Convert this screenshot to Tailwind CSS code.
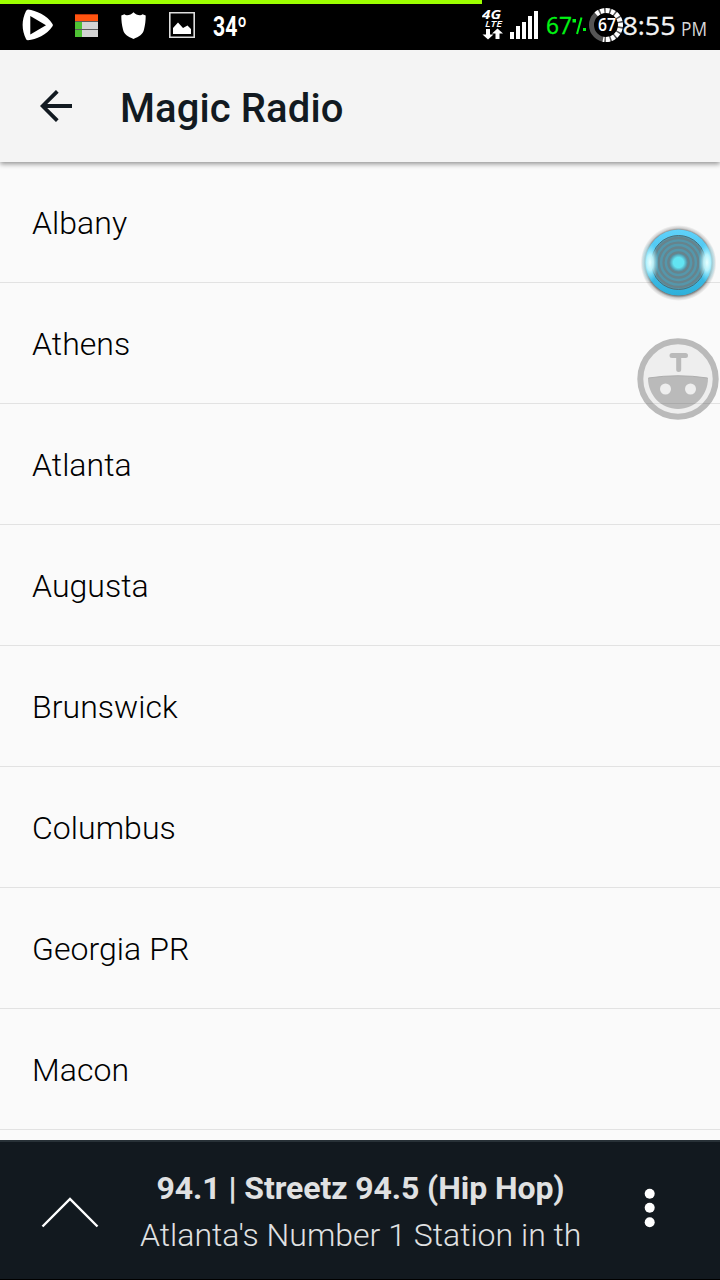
<!DOCTYPE html>
<html lang="en">
<head>
    <meta charset="UTF-8">
    <meta name="viewport" content="width=device-width, initial-scale=1.0">
    <title>Magic Radio</title>
    <script src="https://cdn.jsdelivr.net/npm/@tailwindcss/browser@4"></script>
</head>
<body class="bg-[#fafafa] font-['Roboto',sans-serif]">
    <div class="relative flex h-[1280px] w-[720px] flex-col overflow-hidden">
        <!-- Status bar -->
        <div class="relative flex h-[50px] shrink-0 items-start bg-black text-white">
            <div class="absolute left-0 top-0 h-1 w-[482px] bg-[#9dff00]"></div>
            <svg class="ml-[22px] mt-[9px] h-8 w-8 shrink-0" viewBox="0 0 32 32">
                <path fill="#fff" fill-rule="evenodd" d="M6 .5C14 1.5 25 6 30.5 15Q31.200 16.200 30.500 17.300C25 26 14 30.500 6 31.300Q4.500 31.300 4 30C-.5 21 -.5 11 4 2Q4.800.5 6 .5ZM8.300 7V25.500L24 16.300Z"/>
            </svg>
            <svg class="ml-[21px] mt-[13px] h-6 w-6 shrink-0" viewBox="0 0 24 24">
                <path fill="#ff5410" d="M0 1H23V8H0z"/>
                <path fill="#d4d4d4" d="M7 9H23V16H7zM7 17H23V24H7z"/>
                <path fill="#4fc234" d="M0 9H7V16H0zM0 17H7V24H0z"/>
                <path fill="#b93208" d="M0 1H23V2H0z"/>
                <path fill="#5a5a5a" d="M0 8H23V9H0zM0 16H23V17H0z"/>
            </svg>
            <svg class="ml-[22px] mt-[12px] h-7 w-[25px] shrink-0" viewBox="0 0 25 28">
                <path fill="#fff" d="M12.500.3C14.300 2.200 16.500 3.200 19 3.200Q20.500 3.200 21.500 2.300L24.700 3.600C24.700 9 24.200 13 23 17.500C22 22.500 18 24.500 12.500 27C7 24.500 3 22.500 2 17.500C.8 13 .3 9 .3 3.600L3.500 2.300Q4.500 3.200 6 3.200C8.500 3.200 10.700 2.200 12.500.3Z"/>
            </svg>
            <svg class="ml-[23px] mt-[12px] h-[26px] w-[26px] shrink-0" viewBox="0 0 26 26">
                <path fill="none" stroke="#ddd" stroke-width="1.600" d="M.8.8H25.200V25.200H.8z"/>
                <path fill="#fff" d="M4 22V16L9 10.500L14 16L18.500 13.500L22 17V22Z"/>
            </svg>
            <svg class="ml-[18px] mt-[10px] h-[34px] w-[40px] shrink-0" viewBox="0 0 40 34">
                <text class="font-['Roboto',sans-serif]" x="0" y="25.800" font-size="27" font-weight="700" fill="#fff" textLength="34" lengthAdjust="spacingAndGlyphs">34º</text>
            </svg>
            <!-- Network type -->
            <svg class="ml-[229px] mt-[6px] h-[36px] w-[22px] shrink-0" viewBox="0 0 22 36">
                <g class="font-['Open_Sans',sans-serif]" fill="#fff" font-style="italic" font-weight="700">
                    <text x="0" y="12.500" font-size="13" textLength="19" lengthAdjust="spacingAndGlyphs">4G</text>
                    <text x="3" y="21" font-size="9.500" font-weight="600" textLength="17" lengthAdjust="spacingAndGlyphs">LTE</text>
                </g>
                <path fill="#fff" d="M4 23H8V28.500H11.500L6 33.500L.5 28.500H4zM13.500 33V27.500H10L15.500 22.500L21 27.500H17.500V33z"/>
            </svg>
            <svg class="ml-[6px] mt-[11px] h-7 w-7 shrink-0" viewBox="0 0 28 28">
                <path fill="#fff" d="M0 21H4V28H0zM6 15H10V28H6zM12 11H16V28H12zM18 5H22V28H18zM24 0H28V28H24z"/>
            </svg>
            <svg class="ml-[8px] mt-[10px] h-[34px] w-[43px] shrink-0" viewBox="0 0 43 34">
                <text class="font-['Open_Sans',sans-serif]" x="0" y="24" font-size="23" fill="#00f514" stroke="#00f514" stroke-width=".3" textLength="26" lengthAdjust="spacingAndGlyphs">67</text>
                <path stroke="#00f514" stroke-width="2" fill="none" d="M35.500 7.500L31 24"/>
                <path fill="#00f514" d="M26.500 9h3.500v3.500H26.500zM37 18h3v3H37z"/>
            </svg>
            <!-- Battery ring -->
            <svg class="mt-[7px] -ml-px h-[36px] w-[36px] shrink-0" viewBox="0 0 36 36">
                <circle cx="18" cy="18" r="14.500" fill="none" stroke="#555" stroke-width="5"/>
                <path fill="none" stroke="#fff" stroke-width="5" stroke-dasharray="3.700 1.500" d="M8.200 7.300A14.500 14.500 0 1 1 15 32.200"/>
                <text class="font-['Open_Sans',sans-serif]" x="10" y="23.700" font-size="17.500" font-weight="600" fill="#fff" textLength="18" lengthAdjust="spacingAndGlyphs">67</text>
            </svg>
            <svg class="-ml-[2px] mt-[8px] h-[36px] w-[86px] shrink-0" viewBox="0 0 86 36">
                <g class="font-['Open_Sans',sans-serif]" fill="#f4f4f4" stroke="#f4f4f4" stroke-width=".3">
                    <text x=".5" y="27" font-size="26" textLength="53" lengthAdjust="spacingAndGlyphs">8:55</text>
                    <text x="59" y="27.700" font-size="20" fill="#d8d8d8" stroke="none" textLength="26" lengthAdjust="spacingAndGlyphs">PM</text>
                </g>
            </svg>
        </div>

        <!-- App bar -->
        <header class="relative z-10 flex h-28 shrink-0 items-center bg-[#f4f4f4] pl-10 text-[#121a21] shadow-[0_2px_5px_rgba(0,0,0,0.42)]">
            <svg class="h-8 w-8" viewBox="0 0 32 32" fill="none" stroke="currentColor" stroke-width="3.800">
                <path d="M17.300 1.300L2.600 16L17.300 30.700M2.600 16H32"/>
            </svg>
            <h1 class="ml-12 mt-1.5 text-[40px] font-medium leading-none tracking-[0.1px]">Magic Radio</h1>
        </header>

        <!-- Station list -->
        <ul class="min-h-0 flex-1 overflow-hidden text-[32px] font-light tracking-[0.05px] text-black">
            <li class="flex h-[121px] items-center border-b border-[#e2e2e2] pl-8 pt-0.5">Albany</li>
            <li class="flex h-[121px] items-center border-b border-[#e2e2e2] pl-8 pt-0.5">Athens</li>
            <li class="flex h-[121px] items-center border-b border-[#e2e2e2] pl-8 pt-0.5">Atlanta</li>
            <li class="flex h-[121px] items-center border-b border-[#e2e2e2] pl-8 pt-0.5">Augusta</li>
            <li class="flex h-[121px] items-center border-b border-[#e2e2e2] pl-8 pt-0.5">Brunswick</li>
            <li class="flex h-[121px] items-center border-b border-[#e2e2e2] pl-8 pt-0.5">Columbus</li>
            <li class="flex h-[121px] items-center border-b border-[#e2e2e2] pl-8 pt-0.5">Georgia PR</li>
            <li class="flex h-[121px] items-center border-b border-[#e2e2e2] pl-8 pt-0.5">Macon</li>
        </ul>

        <!-- Now playing -->
        <footer class="flex h-[140px] shrink-0 items-start border-b border-t-2 border-b-black border-t-[#283137] bg-[#12191f] text-[32px] text-[#e0e1e2]">
            <svg class="ml-[41px] mt-[54px] h-[32px] w-[58px] shrink-0" viewBox="0 0 58 32" fill="none" stroke="#fff" stroke-width="2.400">
                <path d="M1.500 30.500L29 3L56.500 30.500"/>
            </svg>
            <div class="ml-[41px] mt-[23px] w-[441px] overflow-hidden whitespace-nowrap">
                <p class="text-center font-bold leading-[47px] tracking-[-0.08px]">94.1 | Streetz 94.5 (Hip Hop)</p>
                <p class="font-light leading-[47px]">Atlanta's Number 1 Station in th</p>
            </div>
            <svg class="ml-[63px] mt-[46px] h-10 w-3 shrink-0" viewBox="0 0 12 40" fill="#fff">
                <circle cx="5.700" cy="5.700" r="5"/>
                <circle cx="5.700" cy="19.800" r="5"/>
                <circle cx="5.700" cy="34.200" r="5"/>
            </svg>
        </footer>

        <!-- Floating bubbles -->
        <svg class="absolute left-[638px] top-[222px] z-20 h-[82px] w-[82px]" viewBox="0 0 82 82">
            <defs>
                <linearGradient id="rim" x1="0" x2="0" y1="0" y2="1">
                    <stop offset="0" stop-color="#5fd2fb"/>
                    <stop offset="1" stop-color="#2db0da"/>
                </linearGradient>
                <radialGradient id="shine">
                    <stop offset="0" stop-color="#e8ffff"/>
                    <stop offset=".4" stop-color="#c4f8ff" stop-opacity=".9"/>
                    <stop offset="1" stop-color="#7be4ff" stop-opacity="0"/>
                </radialGradient>
                <radialGradient id="halo">
                    <stop offset=".86" stop-color="#222" stop-opacity=".6"/>
                    <stop offset=".92" stop-color="#222" stop-opacity=".2"/>
                    <stop offset="1" stop-color="#222" stop-opacity="0"/>
                </radialGradient>
                <radialGradient id="core">
                    <stop offset=".6" stop-color="#62e4f2"/>
                    <stop offset="1" stop-color="#62e4f2" stop-opacity="0"/>
                </radialGradient>
            </defs>
            <circle cx="40.500" cy="41" r="38" fill="url(#halo)"/>
            <circle cx="40.500" cy="40.500" r="33" fill="url(#rim)"/>
            <circle cx="40.500" cy="40.500" r="27" fill="#5597ab" stroke="#4d6c76"/>
            <g fill="none" stroke="#67838c" stroke-width="2.300">
                <circle cx="40.500" cy="40.500" r="24.500"/>
                <circle cx="40.500" cy="40.500" r="19.800"/>
                <circle cx="40.500" cy="40.500" r="15"/>
                <circle cx="40.500" cy="40.500" r="10.200"/>
            </g>
            <ellipse cx="12" cy="40.500" rx="8.500" ry="20" fill="url(#shine)"/>
            <ellipse cx="69" cy="40.500" rx="8.500" ry="20" fill="url(#shine)"/>
            <circle cx="40.500" cy="40.500" r="8.500" fill="url(#core)"/>
        </svg>
        <svg class="absolute left-[637px] top-[338px] z-20 h-[82px] w-[82px]" viewBox="0 0 82 82">
            <circle cx="41" cy="41" r="37.700" fill="#eee" stroke="#bababa" stroke-width="6"/>
            <path fill="none" stroke="#bababa" stroke-width="5" stroke-linecap="round" d="M35 17.500H48.500M41.700 18V31.500"/>
            <path fill="#bababa" d="M11 40Q41 35.500 71 40C71 57 58 71 41 71S11 57 11 40Z"/>
            <path fill="none" stroke="#aeaeae" stroke-width="1" d="M11.500 40Q41 35.500 70.500 40"/>
            <circle cx="28.500" cy="51" r="5.500" fill="#eee"/>
            <circle cx="53.500" cy="51" r="5.500" fill="#eee"/>
            <path stroke="#000" stroke-opacity=".08" d="M9 65.500H73"/>
        </svg>
    </div>
</body>
</html>
